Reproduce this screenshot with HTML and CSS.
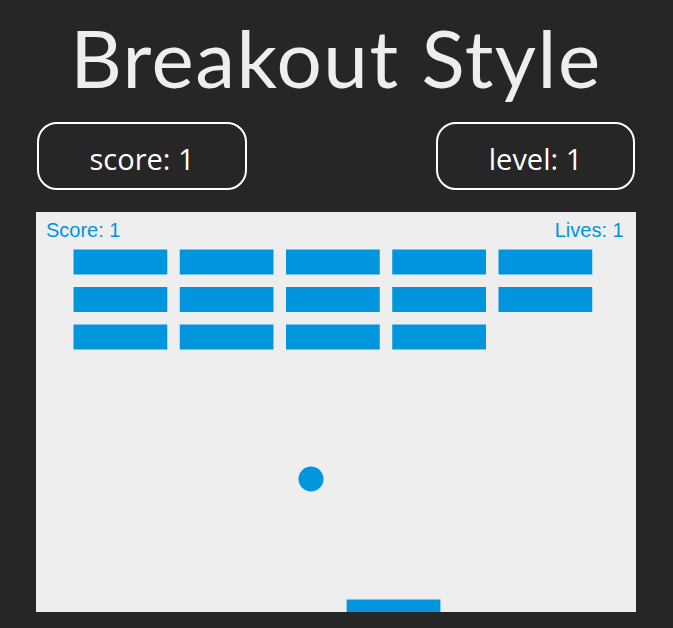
FILE: index.html
```html
<!DOCTYPE html>
<html lang="en">
<head>
<meta charset="utf-8">
<title>Breakout Style</title>
<link rel="stylesheet" href="styles.css">
</head>
<body>
<main class="page">
  <h1 class="title">Breakout Style</h1>
  <div class="stats">
    <div class="stat stat-score">score: 1</div>
    <div class="stat stat-level">level: 1</div>
  </div>
  <svg class="board" viewBox="0 0 480 320" width="600" height="400" xmlns="http://www.w3.org/2000/svg">
    <rect class="board-bg" x="0" y="0" width="480" height="320"/>
    <g class="bricks">
      <rect x="30" y="30" width="75" height="20"/>
      <rect x="115" y="30" width="75" height="20"/>
      <rect x="200" y="30" width="75" height="20"/>
      <rect x="285" y="30" width="75" height="20"/>
      <rect x="370" y="30" width="75" height="20"/>
      <rect x="30" y="60" width="75" height="20"/>
      <rect x="115" y="60" width="75" height="20"/>
      <rect x="200" y="60" width="75" height="20"/>
      <rect x="285" y="60" width="75" height="20"/>
      <rect x="370" y="60" width="75" height="20"/>
      <rect x="30" y="90" width="75" height="20"/>
      <rect x="115" y="90" width="75" height="20"/>
      <rect x="200" y="90" width="75" height="20"/>
      <rect x="285" y="90" width="75" height="20"/>
    </g>
    <circle class="ball" cx="220" cy="213.6" r="10"/>
    <rect class="paddle" x="248.5" y="310" width="75" height="10"/>
    <text class="hud" x="8" y="20">Score: 1</text>
    <text class="hud" x="415" y="20">Lives: 1</text>
  </svg>
</main>
</body>
</html>
```

FILE: styles.css
```css
html, body {
  margin: 0;
  padding: 0;
  background: #262626;
}

.page {
  width: 600px;
  margin: 0 0 0 36px;
  display: flex;
  flex-direction: column;
  align-items: stretch;
}

.title {
  margin: 9px 0 0;
  font-family: "Lato", "Open Sans", sans-serif;
  font-weight: 400;
  font-size: 80px;
  letter-spacing: 1.5px;
  line-height: 96px;
  height: 96px;
  text-align: center;
  color: #eeeeee;
  white-space: nowrap;
}

.stats {
  margin-top: 17px;
  display: flex;
  justify-content: space-between;
}

.stat {
  box-sizing: border-box;
  height: 68px;
  border: 2px solid #ffffff;
  border-radius: 20px;
  display: flex;
  align-items: center;
  justify-content: center;
  font-family: "Open Sans", "Noto Sans", sans-serif;
  font-size: 29px;
  color: #ffffff;
  padding-top: 4px;
}

.stat-score {
  width: 210px;
  margin-left: 1px;
}

.stat-level {
  width: 199px;
  margin-right: 1px;
}

.board {
  display: block;
  margin-top: 22px;
  width: 600px;
  height: 400px;
}

.board-bg {
  fill: #eeeeee;
}

.bricks rect,
.ball,
.paddle {
  fill: #0095dd;
}

.hud {
  font-family: "Liberation Sans", Arial, sans-serif;
  font-size: 16px;
  fill: #0095dd;
}
```
